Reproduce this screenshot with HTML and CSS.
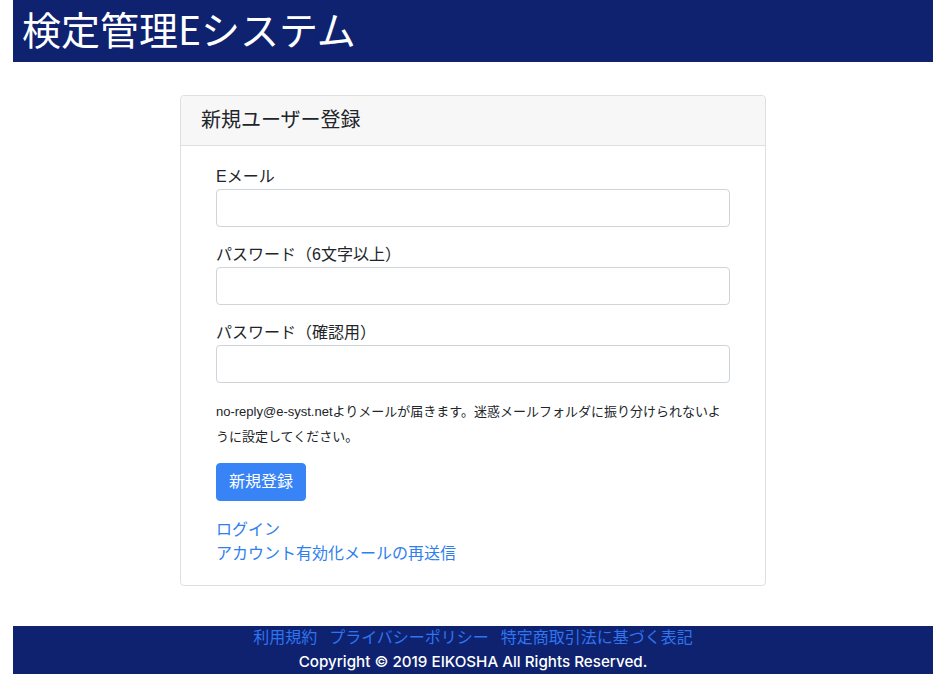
FILE: index.html
```html
<!DOCTYPE html>
<html lang="ja">
<head>
<meta charset="utf-8">
<title>検定管理Eシステム</title>
<link rel="stylesheet" href="styles.css">
</head>
<body>
<div class="page">
  <header class="site-header">
    <h1 class="site-title">検定管理Eシステム</h1>
  </header>
  <main class="main">
    <div class="card">
      <div class="card-header">新規ユーザー登録</div>
      <div class="card-body">
        <form class="form">
          <div class="form-group">
            <label class="label" for="email">Eメール</label>
            <input class="input" id="email" type="email">
          </div>
          <div class="form-group">
            <label class="label" for="pw">パスワード（6文字以上）</label>
            <input class="input" id="pw" type="password">
          </div>
          <div class="form-group">
            <label class="label" for="pw2">パスワード（確認用）</label>
            <input class="input" id="pw2" type="password">
          </div>
          <p class="note">no-reply@e-syst.netよりメールが届きます。迷惑メールフォルダに振り分けられないように設定してください。</p>
          <button class="btn" type="button">新規登録</button>
        </form>
        <div class="links">
          <a href="#" class="link">ログイン</a>
          <a href="#" class="link">アカウント有効化メールの再送信</a>
        </div>
      </div>
    </div>
  </main>
  <footer class="site-footer">
    <div class="footer-links">
      <a href="#" class="footer-link">利用規約</a>
      <a href="#" class="footer-link">プライバシーポリシー</a>
      <a href="#" class="footer-link">特定商取引法に基づく表記</a>
    </div>
    <div class="copyright">Copyright © 2019 EIKOSHA All Rights Reserved.</div>
  </footer>
</div>
</body>
</html>
```
FILE: styles.css
```css
* { box-sizing: border-box; }
body {
  margin: 0;
  font-family: "Liberation Sans", "Noto Sans CJK JP", sans-serif;
  color: #212529;
  background: #fff;
  font-size: 16px;
  line-height: 24px;
}
.page {
  width: 920px;
  margin: 0 auto;
}
.site-header {
  background: #0e2270;
  height: 62px;
}
.site-title {
  margin: 0;
  padding-left: 9px;
  color: #fff;
  font-size: 39px;
  font-weight: normal;
  line-height: 56px;
  font-family: "Noto Sans CJK JP", sans-serif;
}
.main {
  padding: 33px 0 40px;
}
.card {
  width: 586px;
  margin: 0 auto;
  border: 1px solid #dfdfdf;
  border-radius: 4px;
}
.card-header {
  height: 50px;
  padding: 0 20px;
  background: #f7f7f7;
  border-bottom: 1px solid #dfdfdf;
  border-radius: 4px 4px 0 0;
  font-size: 20px;
  line-height: 49px;
  color: #212529;
}
.card-body {
  padding: 19px 35px 19px;
}
.form-group {
  margin-bottom: 16px;
}
.label {
  display: block;
  font-size: 16px;
  line-height: 24px;
}
.input {
  display: block;
  width: 100%;
  height: 38px;
  border: 1px solid #ced4da;
  border-radius: 4px;
  background: #fff;
  font-size: 16px;
}
.note {
  margin: 0 0 14px;
  font-size: 13px;
  line-height: 25px;
}
.btn {
  display: block;
  height: 38px;
  padding: 0 12px;
  border: 1px solid #3884f7;
  border-radius: 4px;
  background: #3884f7;
  color: #fff;
  font-family: inherit;
  font-size: 16px;
  line-height: 36px;
}
.links {
  margin-top: 17px;
  display: flex;
  flex-direction: column;
  align-items: flex-start;
}
.link {
  color: #2f80ed;
  text-decoration: none;
  line-height: 24px;
}
.site-footer {
  background: #0e2270;
  text-align: center;
  height: 48px;
}
.footer-links {
  display: flex;
  justify-content: center;
  gap: 12px;
  line-height: 24px;
}
.footer-link {
  color: #2f74f0;
  text-decoration: none;
}
.copyright {
  color: #fff;
  line-height: 24px;
  font-family: "Inter", "Noto Sans CJK JP", sans-serif;
  font-weight: 500;
  font-size: 15.2px;
}
```
